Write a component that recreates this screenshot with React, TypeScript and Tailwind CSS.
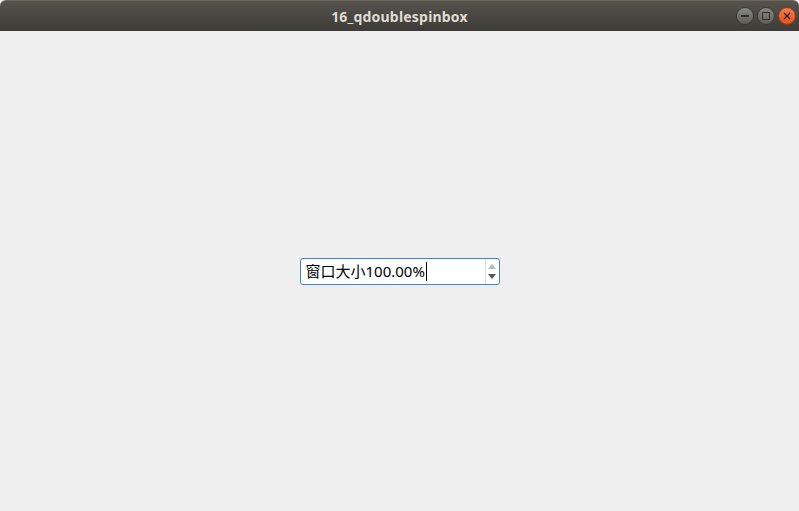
export default function App() {
  return (
    <div className="w-[799px] h-[511px] flex flex-col bg-[#efefef] overflow-hidden font-['Noto_Sans','Noto_Sans_CJK_SC',sans-serif]">
      <div className="h-[31px] shrink-0 relative flex items-center justify-center rounded-t-[6px] bg-gradient-to-b from-[#56534d] to-[#3e3c38] border-t border-[#6a675f]">
        <span className="text-[14px] font-bold text-[#dfdbd2] tracking-[0.2px]">16_qdoublespinbox</span>
        <div className="absolute right-[3px] top-[6px] flex gap-[3px]">
          <div className="w-[18px] h-[18px] rounded-full bg-gradient-to-b from-[#8a8882] to-[#5e5c57] border border-[#3a3834] flex items-center justify-center">
            <div className="w-[8px] h-[1.5px] bg-[#2f2e2b]" />
          </div>
          <div className="w-[18px] h-[18px] rounded-full bg-gradient-to-b from-[#8a8882] to-[#5e5c57] border border-[#3a3834] flex items-center justify-center">
            <div className="w-[8px] h-[8px] border-[1.5px] border-[#2f2e2b]" />
          </div>
          <div className="w-[18px] h-[18px] rounded-full bg-gradient-to-b from-[#f47a4c] to-[#e1521d] border border-[#8c3a18] flex items-center justify-center">
            <svg width="8" height="8" viewBox="0 0 8 8">
              <path d="M1 1L7 7M7 1L1 7" stroke="#3b1a0c" strokeWidth="1.4" />
            </svg>
          </div>
        </div>
      </div>
      <div className="flex-1 flex justify-center pt-[227px]">
        <div className="w-[200px] h-[27px] flex bg-white border border-[#3b86cf] rounded-[3px]">
          <div className="flex-1 flex items-center pl-[5px] text-[15px] text-black leading-none">
            <span>窗口大小100.00%</span>
            <span className="w-px h-[19px] bg-black ml-[1px]" />
          </div>
          <div className="w-[14px] flex flex-col items-center justify-center gap-[5px] border-l border-[#dcdcdc]">
            <svg width="8" height="5" viewBox="0 0 8 5"><path d="M0 5L4 0L8 5Z" fill="#b8b8b8" /></svg>
            <svg width="8" height="5" viewBox="0 0 8 5"><path d="M0 0L4 5L8 0Z" fill="#555" /></svg>
          </div>
        </div>
      </div>
    </div>
  );
}
